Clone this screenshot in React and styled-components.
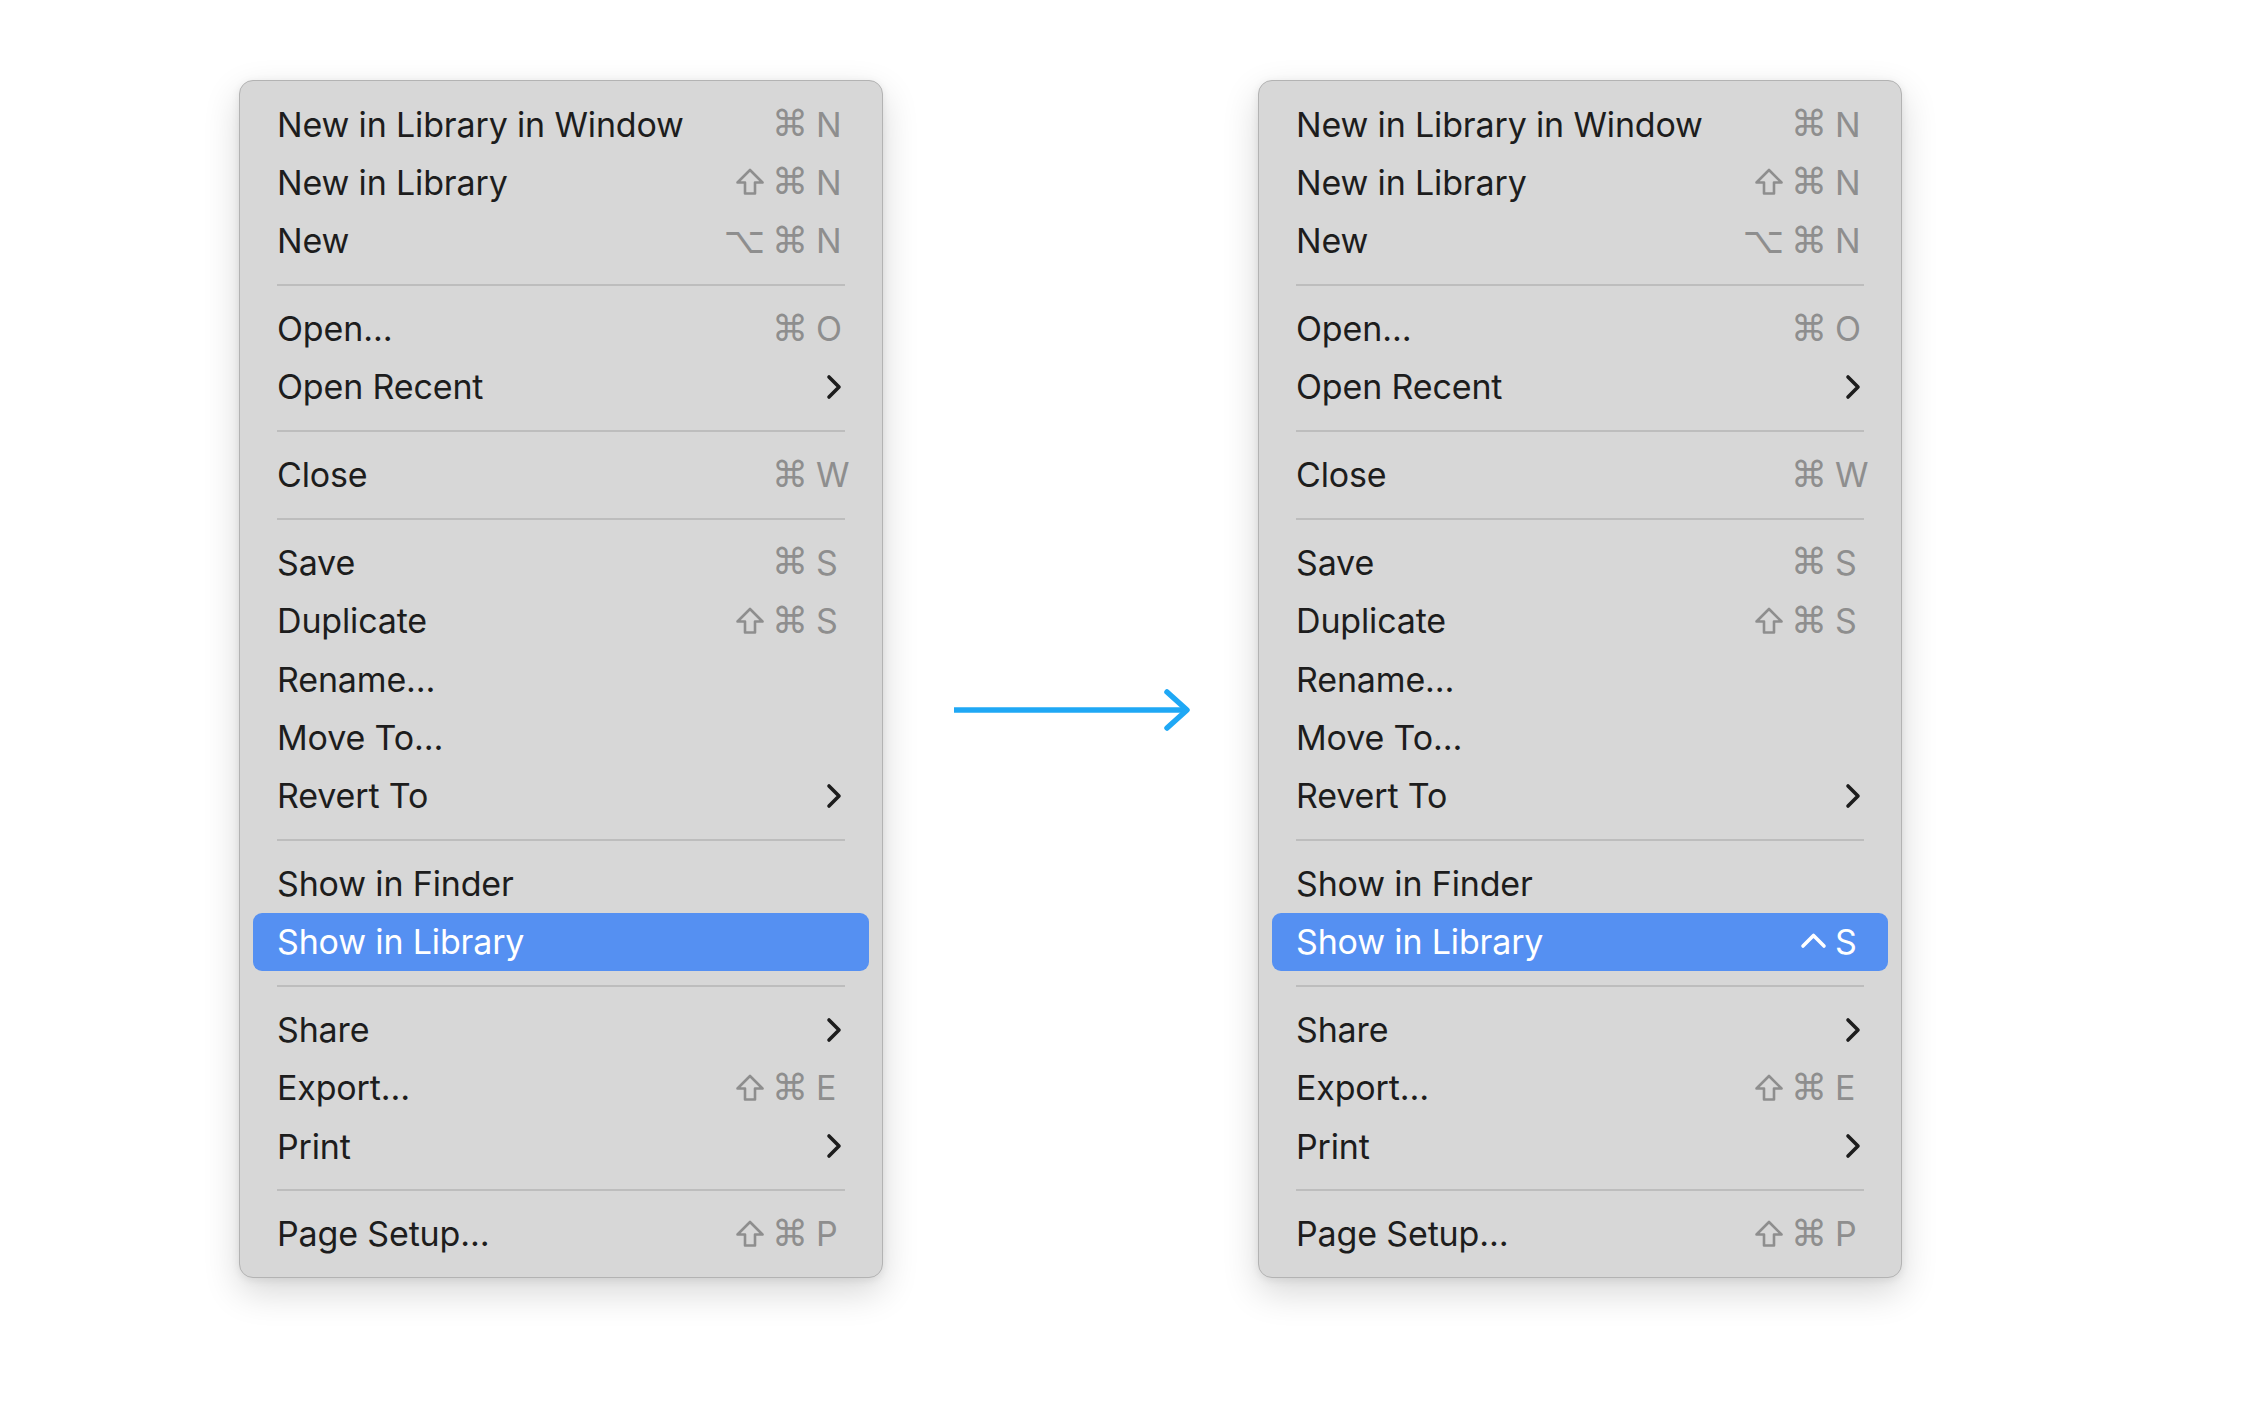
import React from 'react';
import styled, { createGlobalStyle } from 'styled-components';

const GlobalStyle = createGlobalStyle`
    html, body {
        margin: 0;
        padding: 0;
        background: #ffffff;
    }
    * {
        box-sizing: border-box;
    }
`;

const StyledPage = styled.div`
    display: flex;
    align-items: flex-start;
    padding: 80px 0 0 239px;
    min-height: 1421px;
    font-family: Inter, "Noto Sans", "DejaVu Sans", sans-serif;
`;

const StyledMenu = styled.div`
    width: 644px;
    padding: 14px 13px;
    background: #d7d7d7;
    border: 1px solid #b3b3b3;
    border-radius: 14px;
    box-shadow: 0 14px 36px rgba(0, 0, 0, 0.16), 0 2px 8px rgba(0, 0, 0, 0.08);
`;

const StyledRow = styled.div`
    height: 58.3px;
    display: flex;
    align-items: center;
    justify-content: space-between;
    padding: 0 23px 0 24px;
    border-radius: 9px;
    background: ${({ $active }) => ($active ? '#5590f2' : 'transparent')};
    color: ${({ $active }) => ($active ? '#ffffff' : '#1d1d1d')};
`;

const StyledLabel = styled.span`
    font-size: 34px;
    font-weight: 400;
    letter-spacing: -0.15px;
    white-space: nowrap;
`;

const StyledShortcut = styled.span`
    display: flex;
    align-items: center;
    color: ${({ $active }) => ($active ? '#ffffff' : '#8e8e8e')};
    font-size: 34px;
`;

const StyledModifiers = styled.span`
    display: flex;
    align-items: center;
    gap: 7px;
    justify-content: flex-end;
    font-family: "DejaVu Sans", sans-serif;
    font-size: 36px;
    line-height: 1;
`;

const StyledKey = styled.span`
    width: 30px;
    margin-left: 8px;
    text-align: left;
`;

const StyledSeparator = styled.div`
    height: 29.5px;
    display: flex;
    align-items: center;
    padding: 0 24px;

    &::after {
        content: '';
        flex: 1;
        height: 2px;
        background: #bdbdbd;
    }
`;

const StyledArrowSlot = styled.div`
    width: 375px;
    padding: 608px 0 0 71px;
`;

const Chevron = () => (
    <svg width="16" height="26" viewBox="0 0 16 26" style={{ marginRight: 4 }}>
        <polyline points="3,3 13,13 3,23" fill="none" stroke="#1d1d1d" strokeWidth="3.6" strokeLinecap="round" strokeLinejoin="round" />
    </svg>
);

const ShiftGlyph = () => (
    <svg width="30" height="30" viewBox="0 0 30 30">
        <path d="M15 3 L27.5 15.5 L20 15.5 L20 26.5 L10 26.5 L10 15.5 L2.5 15.5 Z" fill="none" stroke="currentColor" strokeWidth="2.6" strokeLinejoin="round" />
    </svg>
);

const ControlGlyph = () => (
    <svg width="27" height="24" viewBox="0 0 27 24">
        <polyline points="3,16 13.5,5.5 24,16" fill="none" stroke="currentColor" strokeWidth="3.6" strokeLinecap="round" strokeLinejoin="round" />
    </svg>
);

const Arrow = () => (
    <svg width="240" height="44" viewBox="0 0 240 44">
        <line x1="0" y1="22" x2="232" y2="22" stroke="#1fa8f5" strokeWidth="5.5" />
        <polyline points="213,4 233,22 213,40" fill="none" stroke="#1fa8f5" strokeWidth="5.5" strokeLinecap="round" strokeLinejoin="round" />
    </svg>
);

const renderModifier = (m) => {
    if (m === 'shift') return <ShiftGlyph key={m} />;
    if (m === 'ctrl') return <ControlGlyph key={m} />;
    return <span key={m}>{m}</span>;
};

const menuItems = [
    { label: 'New in Library in Window', mods: ['⌘'], key: 'N' },
    { label: 'New in Library', mods: ['shift', '⌘'], key: 'N' },
    { label: 'New', mods: ['⌥', '⌘'], key: 'N' },
    'sep',
    { label: 'Open…', mods: ['⌘'], key: 'O' },
    { label: 'Open Recent', submenu: true },
    'sep',
    { label: 'Close', mods: ['⌘'], key: 'W' },
    'sep',
    { label: 'Save', mods: ['⌘'], key: 'S' },
    { label: 'Duplicate', mods: ['shift', '⌘'], key: 'S' },
    { label: 'Rename…' },
    { label: 'Move To…' },
    { label: 'Revert To', submenu: true },
    'sep',
    { label: 'Show in Finder' },
    { label: 'Show in Library', active: true, withShortcut: true },
    'sep',
    { label: 'Share', submenu: true },
    { label: 'Export…', mods: ['shift', '⌘'], key: 'E' },
    { label: 'Print', submenu: true },
    'sep',
    { label: 'Page Setup…', mods: ['shift', '⌘'], key: 'P' },
];

const Menu = ({ showLibraryShortcut }) => {
    return (
        <StyledMenu>
            {menuItems.map((item, i) => {
                if (item === 'sep') return <StyledSeparator key={i} />;
                let mods = item.mods;
                let key = item.key;
                if (item.withShortcut && showLibraryShortcut) {
                    mods = ['ctrl'];
                    key = 'S';
                }
                return (
                    <StyledRow key={i} $active={item.active}>
                        <StyledLabel>{item.label}</StyledLabel>
                        {item.submenu && <Chevron />}
                        {key && (
                            <StyledShortcut $active={item.active}>
                                <StyledModifiers>{mods.map(renderModifier)}</StyledModifiers>
                                <StyledKey>{key}</StyledKey>
                            </StyledShortcut>
                        )}
                    </StyledRow>
                );
            })}
        </StyledMenu>
    );
};

const App = () => {
    return (
        <>
            <GlobalStyle />
            <StyledPage>
                <Menu />
                <StyledArrowSlot>
                    <Arrow />
                </StyledArrowSlot>
                <Menu showLibraryShortcut />
            </StyledPage>
        </>
    );
};

export default App;
